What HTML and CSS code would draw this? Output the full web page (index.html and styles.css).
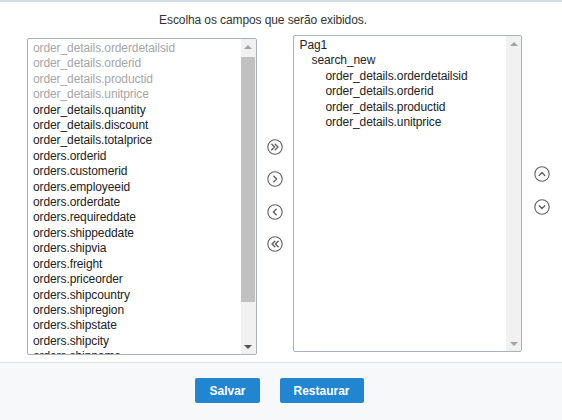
FILE: index.html
```html
<!DOCTYPE html>
<html>
<head>
<meta charset="utf-8">
<link rel="stylesheet" href="styles.css">
</head>
<body>
<div class="topbar"></div>
<div class="title">Escolha os campos que serão exibidos.</div>
<div class="main">
  <div class="list list-left">
    <div class="items">
      <div class="item disabled">order_details.orderdetailsid</div>
      <div class="item disabled">order_details.orderid</div>
      <div class="item disabled">order_details.productid</div>
      <div class="item disabled">order_details.unitprice</div>
      <div class="item">order_details.quantity</div>
      <div class="item">order_details.discount</div>
      <div class="item">order_details.totalprice</div>
      <div class="item">orders.orderid</div>
      <div class="item">orders.customerid</div>
      <div class="item">orders.employeeid</div>
      <div class="item">orders.orderdate</div>
      <div class="item">orders.requireddate</div>
      <div class="item">orders.shippeddate</div>
      <div class="item">orders.shipvia</div>
      <div class="item">orders.freight</div>
      <div class="item">orders.priceorder</div>
      <div class="item">orders.shipcountry</div>
      <div class="item">orders.shipregion</div>
      <div class="item">orders.shipstate</div>
      <div class="item">orders.shipcity</div>
      <div class="item">orders.shipname</div>
      <div class="item">orders.shipaddress</div>
    </div>
    <div class="scrollbar">
      <div class="sb-arrow"><span class="tri-up"></span></div>
      <div class="sb-track"><div class="sb-thumb"></div></div>
      <div class="sb-arrow"><span class="tri-down"></span></div>
    </div>
  </div>
  <div class="mid-buttons">
    <button class="icon-btn" title="Adicionar todos">
      <svg width="16" height="16" viewBox="0 0 16 16"><circle cx="8" cy="8" r="7.2"/><path d="M4.8 5.2 L7.6 8 L4.8 10.8 M8.2 5.2 L11 8 L8.2 10.8"/></svg>
    </button>
    <button class="icon-btn" title="Adicionar">
      <svg width="16" height="16" viewBox="0 0 16 16"><circle cx="8" cy="8" r="7.2"/><path d="M6.8 5.2 L9.6 8 L6.8 10.8"/></svg>
    </button>
    <button class="icon-btn" title="Remover">
      <svg width="16" height="16" viewBox="0 0 16 16"><circle cx="8" cy="8" r="7.2"/><path d="M9.2 5.2 L6.4 8 L9.2 10.8"/></svg>
    </button>
    <button class="icon-btn" title="Remover todos">
      <svg width="16" height="16" viewBox="0 0 16 16"><circle cx="8" cy="8" r="7.2"/><path d="M7.8 5.2 L5 8 L7.8 10.8 M11.2 5.2 L8.4 8 L11.2 10.8"/></svg>
    </button>
  </div>
  <div class="list list-right">
    <div class="items">
      <div class="item">Pag1</div>
      <div class="item lvl1">search_new</div>
      <div class="item lvl2">order_details.orderdetailsid</div>
      <div class="item lvl2">order_details.orderid</div>
      <div class="item lvl2">order_details.productid</div>
      <div class="item lvl2">order_details.unitprice</div>
    </div>
    <div class="scrollbar inactive">
      <div class="sb-arrow"><span class="tri-up"></span></div>
      <div class="sb-track"></div>
      <div class="sb-arrow"><span class="tri-down"></span></div>
    </div>
  </div>
  <div class="side-buttons">
    <button class="icon-btn" title="Subir">
      <svg width="16" height="16" viewBox="0 0 16 16"><circle cx="8" cy="8" r="7.2"/><path d="M5.2 9.4 L8 6.6 L10.8 9.4"/></svg>
    </button>
    <button class="icon-btn" title="Descer">
      <svg width="16" height="16" viewBox="0 0 16 16"><circle cx="8" cy="8" r="7.2"/><path d="M5.2 6.8 L8 9.6 L10.8 6.8"/></svg>
    </button>
  </div>
</div>
<div class="footer">
  <button class="btn">Salvar</button>
  <button class="btn">Restaurar</button>
</div>
</body>
</html>
```

FILE: styles.css
```css
* { box-sizing: border-box; }
html, body {
  margin: 0;
  padding: 0;
  background: #ffffff;
  font-family: "Liberation Sans", Arial, sans-serif;
  font-size: 12px;
  letter-spacing: -0.1px;
  color: #333333;
}
.topbar {
  height: 2px;
  background: #d3dce6;
}
.title {
  padding-top: 11px;
  padding-right: 36px;
  line-height: 14px;
  text-align: center;
  color: #333333;
}
.main {
  display: flex;
  align-items: flex-start;
  margin-top: 8px;
  padding-left: 27px;
}
.list {
  display: flex;
  width: 230px;
  height: 317px;
  border: 1px solid #a9b1bb;
  border-radius: 2px;
  background: #fff;
  overflow: hidden;
}
.list-left { margin-top: 3px; }
.items {
  flex: 1;
  overflow: hidden;
  padding: 2px 0 0 5px;
}
.list-right .items { padding-left: 6px; }
.item {
  line-height: 15.4px;
  white-space: nowrap;
  color: #222222;
}
.item.disabled { color: #a6a6a6; }
.item.lvl1 { padding-left: 12px; }
.item.lvl2 { padding-left: 26px; }
.scrollbar {
  width: 15px;
  display: flex;
  flex-direction: column;
  background: #f1f1f1;
}
.sb-arrow {
  height: 15px;
  display: flex;
  align-items: center;
  justify-content: center;
}
.tri-up, .tri-down {
  width: 0;
  height: 0;
  border-left: 4px solid transparent;
  border-right: 4px solid transparent;
}
.tri-up { border-bottom: 4px solid #a3a3a3; }
.tri-down { border-top: 4px solid #505050; }
.inactive .tri-up, .inactive .tri-down { border-top-color: #a3a3a3; border-bottom-color: #a3a3a3; }
.sb-track {
  flex: 1;
  padding: 3px 1px 0 0;
}
.sb-thumb {
  height: 245px;
  background: #c1c1c1;
}
.mid-buttons {
  width: 36px;
  align-self: stretch;
  display: flex;
  flex-direction: column;
  align-items: center;
  justify-content: center;
  gap: 16.5px;
  padding-top: 1px;
}
.side-buttons {
  width: 40px;
  align-self: stretch;
  display: flex;
  flex-direction: column;
  align-items: center;
  justify-content: center;
  gap: 17px;
  padding-bottom: 9px;
}
.icon-btn {
  width: 16px;
  height: 16px;
  padding: 0;
  margin: 0;
  border: 0;
  background: transparent;
  cursor: pointer;
  display: block;
}
.icon-btn svg {
  display: block;
  fill: none;
  stroke: #606060;
  stroke-width: 1.1;
  stroke-linecap: round;
  stroke-linejoin: round;
}
.icon-btn svg path { stroke-width: 1.4; }
.footer {
  margin-top: 7px;
  border-top: 1px solid #d8dfe6;
  background: #f7f8fa;
  height: 58px;
  display: flex;
  justify-content: center;
  align-items: flex-start;
  gap: 20px;
  padding-top: 15px;
  padding-right: 3px;
}
.btn {
  height: 25px;
  padding: 0 14px;
  border: 0;
  border-radius: 2px;
  background: #2185d0;
  color: #ffffff;
  font-family: "Liberation Sans", Arial, sans-serif;
  font-size: 12px;
  font-weight: bold;
  letter-spacing: 0;
  cursor: pointer;
}
```
